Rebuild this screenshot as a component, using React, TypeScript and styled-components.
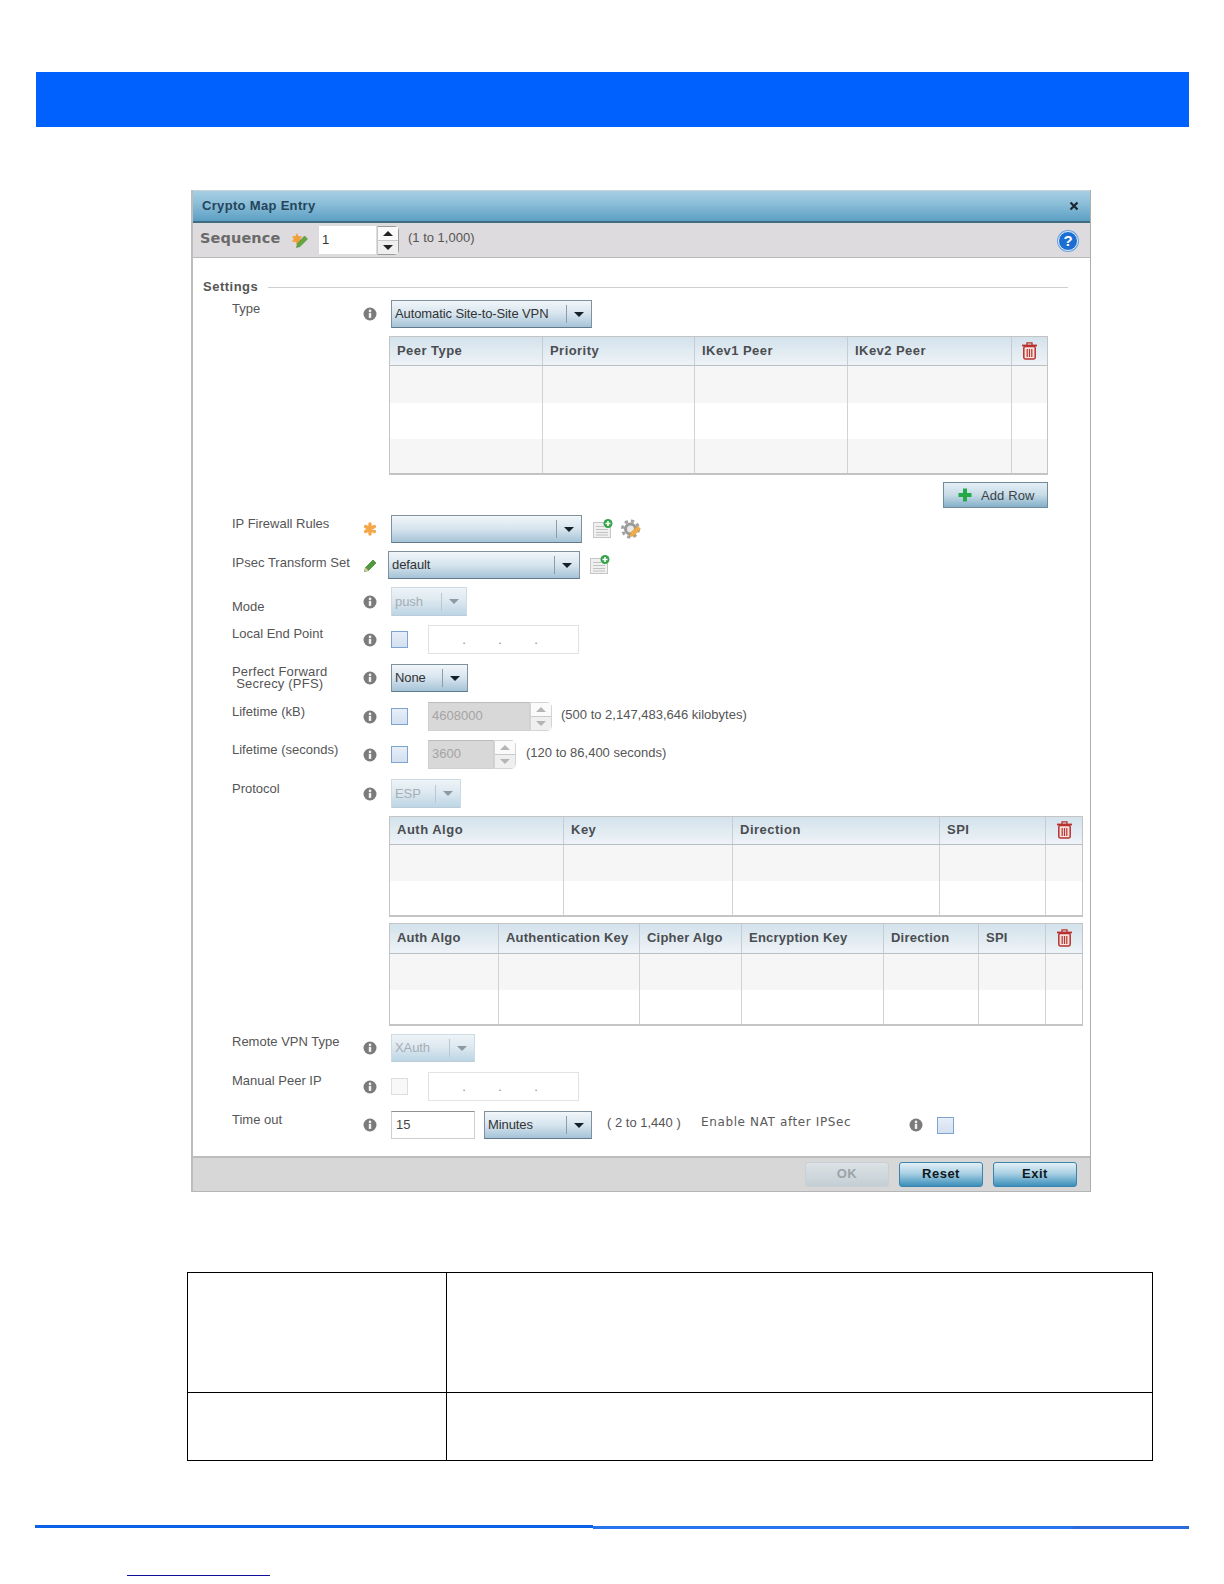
import React from "react";
import styled, { createGlobalStyle } from "styled-components";

const Global = createGlobalStyle`
  html, body { margin: 0; padding: 0; background: #fff; }
  body { font-family: "Liberation Sans", Arial, sans-serif; }
  * { box-sizing: border-box; }
`;

const Page = styled.div`
  width: 1224px;
  height: 1584px;
  padding-top: 72px;
  overflow: hidden;
`;
const Banner = styled.div`
  width: 1153px;
  height: 55px;
  margin-left: 36px;
  background: #0061ff;
`;
const Dialog = styled.section`
  width: 900px;
  height: 1002px;
  margin: 63px 0 0 191px;
  display: flex;
  flex-direction: column;
  background: #fff;
  border-left: 2px solid #bdbdbd;
  border-right: 1px solid #adadad;
  border-bottom: 1px solid #b5b5b5;
`;
const TitleBar = styled.header`
  height: 33px;
  flex: none;
  display: flex;
  align-items: center;
  justify-content: space-between;
  padding: 0 11px 1px 9px;
  background: linear-gradient(#a6cee3 0%, #8dbfd9 40%, #5c9fc4 100%);
  border-top: 1px solid #c9d3d8;
  border-bottom: 2px solid #3f6d80;
`;
const DialogTitle = styled.h2`
  margin: 0;
  font-size: 13px;
  font-weight: 700;
  letter-spacing: 0.32px;
  color: #24455c;
`;
const SequenceBar = styled.div`
  height: 35px;
  flex: none;
  display: flex;
  align-items: center;
  padding: 0 12px 0 7px;
  background: #dddbdd;
  border-bottom: 1px solid #b9b9b9;
`;
const SequenceTitle = styled.span`
  width: 92px;
  margin-bottom: 5px;
  font: 700 14.5px "DejaVu Sans", Verdana, sans-serif;
  letter-spacing: 0.1px;
  color: #6a6a6a;
`;
const SequenceInput = styled.div`
  width: 57px;
  height: 28px;
  margin-left: 11px;
  padding: 6px 0 0 3px;
  font-size: 13px;
  color: #333;
  background: #fff;
`;
const Spinner = styled.div<{ $bright?: boolean; $ml?: number }>`
  width: 22px;
  height: 29px;
  flex: none;
  margin-left: ${(p) => p.$ml ?? 0}px;
  display: flex;
  flex-direction: column;
  background: #fff;
  border: 1px solid ${(p) => (p.$bright ? "#9a9a9a" : "#d4d4d4")};
  border-left-color: ${(p) => (p.$bright ? "#c8c8c8" : "#d4d4d4")};
  border-radius: 0 5px 5px 0;
`;
const SpinPart = styled.div<{ $down?: boolean }>`
  flex: 1;
  display: flex;
  align-items: center;
  justify-content: center;
  background: ${(p) => (p.$down ? "#efefef" : "#fafafa")};
  & + & { border-top: 1px solid #c9c9c9; }
`;
const Arrow = styled.i<{ $down?: boolean; $color: string }>`
  display: block;
  width: 0;
  height: 0;
  border-left: 5px solid transparent;
  border-right: 5px solid transparent;
  ${(p) => (p.$down ? "border-top" : "border-bottom")}: 5px solid ${(p) => p.$color};
`;
const RangeText = styled.span<{ $ml: number; $mb?: number; $w?: number }>`
  margin-left: ${(p) => p.$ml}px;
  margin-bottom: ${(p) => p.$mb ?? 4}px;
  ${(p) => (p.$w ? `width: ${p.$w}px; flex: none;` : "")}
  font-size: 13px;
  color: #555;
  white-space: nowrap;
`;
const HelpBadge = styled.span`
  width: 20px;
  height: 20px;
  margin: 1px 0 0 auto;
  display: flex;
  align-items: center;
  justify-content: center;
  border-radius: 50%;
  border: 1.5px solid #e6eff9;
  background: #1c6ed2;
  box-shadow: 0 0 0 1px #6ea4e2;
  color: #fff;
  font-weight: 700;
  font-size: 15px;
`;
const Body = styled.div`
  flex: 1;
  display: flex;
  flex-direction: column;
  min-height: 0;
`;
const Legend = styled.div`
  height: 20px;
  margin: 19px 22px 0 10px;
  display: flex;
  align-items: center;
  gap: 10px;
  flex: none;
`;
const LegendText = styled.span`
  font-size: 13px;
  font-weight: 700;
  letter-spacing: 0.5px;
  color: #555;
  margin-bottom: 1px;
`;
const LegendLine = styled.span`
  flex: 1;
  height: 1px;
  background: #cfcfcf;
`;
const Row = styled.div<{ $mt: number }>`
  flex: none;
  display: flex;
  align-items: center;
  margin-top: ${(p) => p.$mt}px;
  padding-left: 39px;
`;
const Label = styled.label<{ $shift?: number }>`
  width: 131px;
  flex: none;
  font-size: 13px;
  line-height: 14px;
  color: #555;
  white-space: nowrap;
  margin-top: ${(p) => Math.max(0, (p.$shift ?? -6) * 2)}px;
  margin-bottom: ${(p) => Math.max(0, -(p.$shift ?? -6) * 2)}px;
`;
const TwoLines = styled.span`
  display: inline-block;
  text-align: center;
  line-height: 12px;
  letter-spacing: 0.2px;
`;
const HintSlot = styled.span`
  width: 14px;
  height: 16px;
  flex: none;
  display: flex;
  align-items: center;
  justify-content: center;
`;
const SelectBox = styled.div<{ $w: number; $h?: number; $ml?: number; $off?: boolean }>`
  width: ${(p) => p.$w}px;
  height: ${(p) => p.$h ?? 28}px;
  margin-left: ${(p) => p.$ml ?? 14}px;
  flex: none;
  display: flex;
  align-items: center;
  border: 1px solid ${(p) => (p.$off ? "#cfdbe3" : "#7f919c")};
  border-bottom-color: ${(p) => (p.$off ? "#b9ccd8" : "#62798a")};
  background: ${(p) =>
    p.$off
      ? "linear-gradient(#eef4f8 0%, #dbe7ef 50%, #bcd5e5 100%)"
      : "linear-gradient(#f1f6f9 0%, #d6e4ee 50%, #a5c3d7 100%)"};
  color: ${(p) => (p.$off ? "#a5aeb4" : "#333")};
  font-size: 13px;
  letter-spacing: -0.1px;
`;
const SelectValue = styled.span`
  flex: 1;
  padding: 0 0 1px 3px;
  white-space: nowrap;
  overflow: hidden;
`;
const SelectButton = styled.span<{ $off?: boolean }>`
  width: 25px;
  height: 18px;
  flex: none;
  display: flex;
  align-items: center;
  justify-content: center;
  border-left: 1px solid ${(p) => (p.$off ? "#b9c9d4" : "#8d9ca6")};
`;
const IconGap = styled.span<{ $ml: number }>`
  margin-left: ${(p) => p.$ml}px;
  display: flex;
`;
const CheckBox = styled.span<{ $off?: boolean; $ml?: number }>`
  width: 17px;
  height: 17px;
  flex: none;
  margin-left: ${(p) => p.$ml ?? 14}px;
  border: 1px solid ${(p) => (p.$off ? "#dedede" : "#7ea4d2")};
  background: ${(p) => (p.$off ? "#f8f8f8" : "linear-gradient(#e7eef7, #d3e0f0)")};
`;
const IpBox = styled.div`
  width: 151px;
  height: 29px;
  margin-left: 20px;
  flex: none;
  display: flex;
  padding: 6px 0 0 17px;
  border: 1px solid #e2e2e2;
  font-size: 13px;
  color: #888;
`;
const IpDot = styled.span`
  width: 36px;
  text-align: center;
`;
const DisabledInput = styled.div<{ $w: number }>`
  width: ${(p) => p.$w}px;
  height: 29px;
  margin-left: 20px;
  flex: none;
  padding: 5px 0 0 3px;
  background: #d8d8d8;
  border: 1px solid #d0d0d0;
  border-top-color: #bcbcbc;
  font-size: 13px;
  color: #a4a4a4;
`;
const TextInput = styled.div`
  width: 84px;
  height: 28px;
  margin-left: 14px;
  flex: none;
  padding: 5px 0 0 4px;
  border: 1px solid #cfcfcf;
  border-top-color: #8f8f8f;
  font-size: 13px;
  color: #444;
`;
const NatText = styled.span`
  width: 208px;
  flex: none;
  margin-bottom: 6px;
  font: 12px "DejaVu Sans", Verdana, sans-serif;
  letter-spacing: 0.62px;
  color: #5a5a5a;
  white-space: nowrap;
`;
const Grid = styled.div<{ $w: number; $mt: number }>`
  width: ${(p) => p.$w}px;
  margin: ${(p) => p.$mt}px 0 0 196px;
  flex: none;
  border: 1px solid #c4c4c4;
  border-bottom-width: 2px;
`;
const GridRow = styled.div<{ $cols: string; $h: number }>`
  display: grid;
  grid-template-columns: ${(p) => p.$cols};
  height: ${(p) => p.$h}px;
`;
const HeadCell = styled.div<{ $icon?: boolean; $ls?: number }>`
  display: flex;
  align-items: center;
  justify-content: ${(p) => (p.$icon ? "center" : "flex-start")};
  padding: 0 0 2px ${(p) => (p.$icon ? 0 : 7)}px;
  border-right: 1px solid #c6ccd1;
  border-bottom: 1px solid #b8c0c6;
  background: linear-gradient(#d3e2ec, #eef3f7);
  font-size: 13px;
  font-weight: 700;
  letter-spacing: ${(p) => p.$ls ?? 0.5}px;
  color: #4a4d50;
  white-space: nowrap;
  &:last-child { border-right: 0; }
`;
const BodyCell = styled.div<{ $alt: boolean }>`
  border-right: 1px solid #d2d2d2;
  background: ${(p) => (p.$alt ? "#f6f6f6" : "#fff")};
  &:last-child { border-right: 0; }
`;
const AddRowLine = styled.div`
  display: flex;
  justify-content: flex-end;
  flex: none;
  margin-top: 7px;
  padding-right: 42px;
`;
const AddRowButton = styled.button`
  width: 105px;
  height: 26px;
  display: flex;
  align-items: center;
  padding: 0 0 0 14px;
  gap: 9px;
  border: 1px solid #6f8c9c;
  background: linear-gradient(#e4eff5, #c6dbe7 50%, #84b0c8);
  font: 13px "Liberation Sans", Arial, sans-serif;
  letter-spacing: 0.1px;
  color: #3d4347;
`;
const Footer = styled.footer`
  height: 35px;
  flex: none;
  display: flex;
  justify-content: flex-end;
  gap: 10px;
  padding: 4px 13px 0 0;
  background: #d7d7d7;
  border-top: 2px solid #bcbcbc;
`;
const FooterButton = styled.button<{ $off?: boolean }>`
  width: 84px;
  height: 25px;
  padding: 0 0 2px;
  border-radius: 3px;
  border: 1px solid ${(p) => (p.$off ? "#c8d0d4" : "#3b83ac")};
  background: ${(p) =>
    p.$off
      ? "linear-gradient(#dce2e5, #c3cfd5)"
      : "linear-gradient(#e3f0f6 0%, #a9d0e3 45%, #3c8fbb 100%)"};
  font: 700 13px "Liberation Sans", Arial, sans-serif;
  letter-spacing: 0.5px;
  color: ${(p) => (p.$off ? "#9aa4a8" : "#10181d")};
`;
const DescTable = styled.div`
  width: 966px;
  height: 189px;
  margin: 80px 0 0 187px;
  display: grid;
  grid-template-columns: 259px 1fr;
  grid-template-rows: 120px 1fr;
  border-top: 1px solid #000;
  border-left: 1px solid #000;
`;
const DescCell = styled.div`
  border-right: 1px solid #000;
  border-bottom: 1px solid #000;
`;
const Rule = styled.div`
  width: 1154px;
  height: 4px;
  margin: 64px 0 0 35px;
  display: flex;
  align-items: flex-start;
`;
const RuleSegment = styled.div<{ $w: number; $mt: number; $color: string }>`
  width: ${(p) => p.$w}px;
  height: 3px;
  margin-top: ${(p) => p.$mt}px;
  background: ${(p) => p.$color};
`;
const FootLink = styled.div`
  width: 143px;
  height: 1px;
  margin: 46px 0 0 127px;
  background: #10109c;
`;

const Info = () => (
  <svg width="14" height="14" viewBox="0 0 14 14">
    <circle cx="7" cy="7" r="6.5" fill="#7b7b7b" />
    <circle cx="7" cy="3.9" r="1.3" fill="#f2f2f2" />
    <rect x="5.8" y="5.9" width="2.4" height="5" fill="#f2f2f2" />
  </svg>
);
const Star = () => (
  <svg width="14" height="14" viewBox="0 0 14 14" stroke="#f5a646" strokeWidth="3.4" strokeLinecap="round">
    <path d="M7 2v10M2.6 4.5l8.8 5M11.4 4.5l-8.8 5" />
  </svg>
);
const Pencil = () => (
  <svg width="14" height="16" viewBox="0 0 14 16">
    <path d="M1.5 14.5l1-4L10 3l3 3-7.5 7.5z" fill="#4f9b3c" stroke="#33752a" strokeWidth=".6" />
    <path d="M1.5 14.5l1-4 3 3z" fill="#d8c79a" />
  </svg>
);
const SequenceMark = () => (
  <svg width="16" height="16" viewBox="0 0 16 16">
    <path d="M5 1l1.6 3.2L10 4 8.4 7l1.6 3-3.4-.2L5 13 3.4 9.8 0 10l1.6-3L0 4l3.4.2z" fill="#f2a13a" />
    <path d="M4.5 15.5l1-4L12.5 4l3 3-7.5 7.5z" fill="#62a83f" stroke="#3d7a2c" strokeWidth=".5" />
  </svg>
);
const DocAdd = () => (
  <svg width="20" height="20" viewBox="0 0 20 20">
    <rect x="0.5" y="3.5" width="17" height="15" fill="#f0f0f0" stroke="#c6c6c6" />
    <path d="M3 7.5h8M3 10.5h12M3 13.5h12M3 16h12" stroke="#c2c2c2" />
    <circle cx="15" cy="4.5" r="4.5" fill="#35a34b" />
    <path d="M15 2v5M12.5 4.5h5" stroke="#fff" strokeWidth="1.6" />
  </svg>
);
const Gear = () => (
  <svg width="20" height="20" viewBox="0 0 20 20">
    <circle cx="9.5" cy="10" r="8" fill="none" stroke="#a2a2a2" strokeWidth="3" strokeDasharray="3.3 3" />
    <circle cx="9.5" cy="10" r="5" fill="#e9e9e9" stroke="#9a9a9a" strokeWidth="3" />
    <path d="M8.5 17.5l1-3.5L16.5 7l3 3-7 7z" fill="#f2ad48" stroke="#c98a2c" strokeWidth=".5" />
  </svg>
);
const Trash = () => (
  <svg width="17" height="19" viewBox="0 0 17 19" fill="none" stroke="#b8322f">
    <path d="M1 4.5h15" strokeWidth="1.8" />
    <path d="M6 4V1.8h5V4" strokeWidth="1.3" />
    <rect x="2.8" y="5.5" width="11.4" height="12.5" rx="1.4" fill="#f6e3e0" strokeWidth="1.5" />
    <path d="M6.2 8v8M8.5 8v8M10.8 8v8" strokeWidth="1.2" />
  </svg>
);
const Plus = () => (
  <svg width="14" height="14" viewBox="0 0 14 14">
    <path d="M7 0.5v13M0.5 7h13" stroke="#24a848" strokeWidth="4" />
  </svg>
);
const Close = () => (
  <svg width="10" height="10" viewBox="0 0 10 10">
    <path d="M1.5 1.5l7 7M8.5 1.5l-7 7" stroke="#1b2830" strokeWidth="2.2" />
  </svg>
);

const Select = ({ value, w, h, ml, off }: { value?: string; w: number; h?: number; ml?: number; off?: boolean }) => (
  <SelectBox $w={w} $h={h} $ml={ml} $off={off}>
    <SelectValue>{value}</SelectValue>
    <SelectButton $off={off}>
      <Arrow $down $color={off ? "#8b9aa5" : "#15202a"} />
    </SelectButton>
  </SelectBox>
);

const Spin = ({ bright, ml }: { bright?: boolean; ml?: number }) => (
  <Spinner $bright={bright} $ml={ml}>
    <SpinPart>
      <Arrow $color={bright ? "#222" : "#b5b5b5"} />
    </SpinPart>
    <SpinPart $down>
      <Arrow $down $color={bright ? "#222" : "#b5b5b5"} />
    </SpinPart>
  </Spinner>
);

const IpField = () => (
  <IpBox>
    <IpDot>.</IpDot>
    <IpDot>.</IpDot>
    <IpDot>.</IpDot>
  </IpBox>
);

const DataTable = ({
  w,
  mt,
  widths,
  heads,
  heights,
  ls,
}: {
  w: number;
  mt: number;
  widths: number[];
  heads: string[];
  heights: number[];
  ls: number;
}) => {
  const cols = widths.map((c) => `${c}px`).join(" ");
  return (
    <Grid $w={w} $mt={mt}>
      <GridRow $cols={cols} $h={heights[0]}>
        {heads.map((t) => (
          <HeadCell key={t} $ls={ls}>{t}</HeadCell>
        ))}
        <HeadCell $icon>
          <Trash />
        </HeadCell>
      </GridRow>
      {heights.slice(1).map((h, i) => (
        <GridRow key={i} $cols={cols} $h={h}>
          {widths.map((_, c) => (
            <BodyCell key={c} $alt={i % 2 === 0} />
          ))}
        </GridRow>
      ))}
    </Grid>
  );
};

export default function App() {
  return (
    <>
      <Global />
      <Page>
        <Banner />
        <Dialog>
          <TitleBar>
            <DialogTitle>Crypto Map Entry</DialogTitle>
            <Close />
          </TitleBar>
          <SequenceBar>
            <SequenceTitle>Sequence</SequenceTitle>
            <SequenceMark />
            <SequenceInput>1</SequenceInput>
            <Spin bright ml={1} />
            <RangeText $ml={9} $mb={6}>(1 to 1,000)</RangeText>
            <HelpBadge>?</HelpBadge>
          </SequenceBar>
          <Body>
            <Legend>
              <LegendText>Settings</LegendText>
              <LegendLine />
            </Legend>
            <Row $mt={3}>
              <Label $shift={-5}>Type</Label>
              <HintSlot><Info /></HintSlot>
              <Select value="Automatic Site-to-Site VPN" w={201} />
            </Row>
            <DataTable
              w={659}
              mt={8}
              ls={0.45}
              widths={[153, 152, 153, 164, 35]}
              heads={["Peer Type", "Priority", "IKev1 Peer", "IKev2 Peer"]}
              heights={[29, 37, 36, 34]}
            />
            <AddRowLine>
              <AddRowButton>
                <Plus />
                Add Row
              </AddRowButton>
            </AddRowLine>
            <Row $mt={7}>
              <Label $shift={-5}>IP Firewall Rules</Label>
              <HintSlot><Star /></HintSlot>
              <Select w={191} />
              <IconGap $ml={11}><DocAdd /></IconGap>
              <IconGap $ml={8}><Gear /></IconGap>
            </Row>
            <Row $mt={8}>
              <Label $shift={-2}>IPsec Transform Set</Label>
              <HintSlot><Pencil /></HintSlot>
              <Select value="default" w={192} ml={11} />
              <IconGap $ml={10}><DocAdd /></IconGap>
            </Row>
            <Row $mt={8}>
              <Label $shift={5}>Mode</Label>
              <HintSlot><Info /></HintSlot>
              <Select value="push" w={76} h={29} off />
            </Row>
            <Row $mt={9}>
              <Label>Local End Point</Label>
              <HintSlot><Info /></HintSlot>
              <CheckBox />
              <IpField />
            </Row>
            <Row $mt={10}>
              <Label $shift={0}>
                <TwoLines>
                  Perfect Forward
                  <br />
                  Secrecy (PFS)
                </TwoLines>
              </Label>
              <HintSlot><Info /></HintSlot>
              <Select value="None" w={77} />
            </Row>
            <Row $mt={10}>
              <Label $shift={-5}>Lifetime (kB)</Label>
              <HintSlot><Info /></HintSlot>
              <CheckBox />
              <DisabledInput $w={102}>4608000</DisabledInput>
              <Spin />
              <RangeText $ml={9}>(500 to 2,147,483,646 kilobytes)</RangeText>
            </Row>
            <Row $mt={9}>
              <Label $shift={-5}>Lifetime (seconds)</Label>
              <HintSlot><Info /></HintSlot>
              <CheckBox />
              <DisabledInput $w={66}>3600</DisabledInput>
              <Spin />
              <RangeText $ml={10}>(120 to 86,400 seconds)</RangeText>
            </Row>
            <Row $mt={10}>
              <Label $shift={-5}>Protocol</Label>
              <HintSlot><Info /></HintSlot>
              <Select value="ESP" w={70} h={29} off />
            </Row>
            <DataTable
              w={694}
              mt={8}
              ls={0.5}
              widths={[174, 169, 207, 106, 36]}
              heads={["Auth Algo", "Key", "Direction", "SPI"]}
              heights={[28, 36, 34]}
            />
            <DataTable
              w={694}
              mt={6}
              ls={0.22}
              widths={[109, 141, 102, 142, 95, 67, 36]}
              heads={["Auth Algo", "Authentication Key", "Cipher Algo", "Encryption Key", "Direction", "SPI"]}
              heights={[30, 36, 34]}
            />
            <Row $mt={8}>
              <Label>Remote VPN Type</Label>
              <HintSlot><Info /></HintSlot>
              <Select value="XAuth" w={84} off />
            </Row>
            <Row $mt={10}>
              <Label>Manual Peer IP</Label>
              <HintSlot><Info /></HintSlot>
              <CheckBox $off />
              <IpField />
            </Row>
            <Row $mt={10}>
              <Label $shift={-5}>Time out</Label>
              <HintSlot><Info /></HintSlot>
              <TextInput>15</TextInput>
              <Select value="Minutes" w={108} ml={9} />
              <RangeText $ml={15} $mb={6} $w={94}>( 2 to 1,440 )</RangeText>
              <NatText>Enable NAT after IPSec</NatText>
              <HintSlot><Info /></HintSlot>
              <CheckBox />
            </Row>
          </Body>
          <Footer>
            <FooterButton $off>OK</FooterButton>
            <FooterButton>Reset</FooterButton>
            <FooterButton>Exit</FooterButton>
          </Footer>
        </Dialog>
        <DescTable>
          <DescCell />
          <DescCell />
          <DescCell />
          <DescCell />
        </DescTable>
        <Rule>
          <RuleSegment $w={558} $mt={0} $color="#0a62e6" />
          <RuleSegment $w={480} $mt={1} $color="#2574ee" />
          <RuleSegment $w={116} $mt={1} $color="#2a6ade" />
        </Rule>
        <FootLink />
      </Page>
    </>
  );
}
